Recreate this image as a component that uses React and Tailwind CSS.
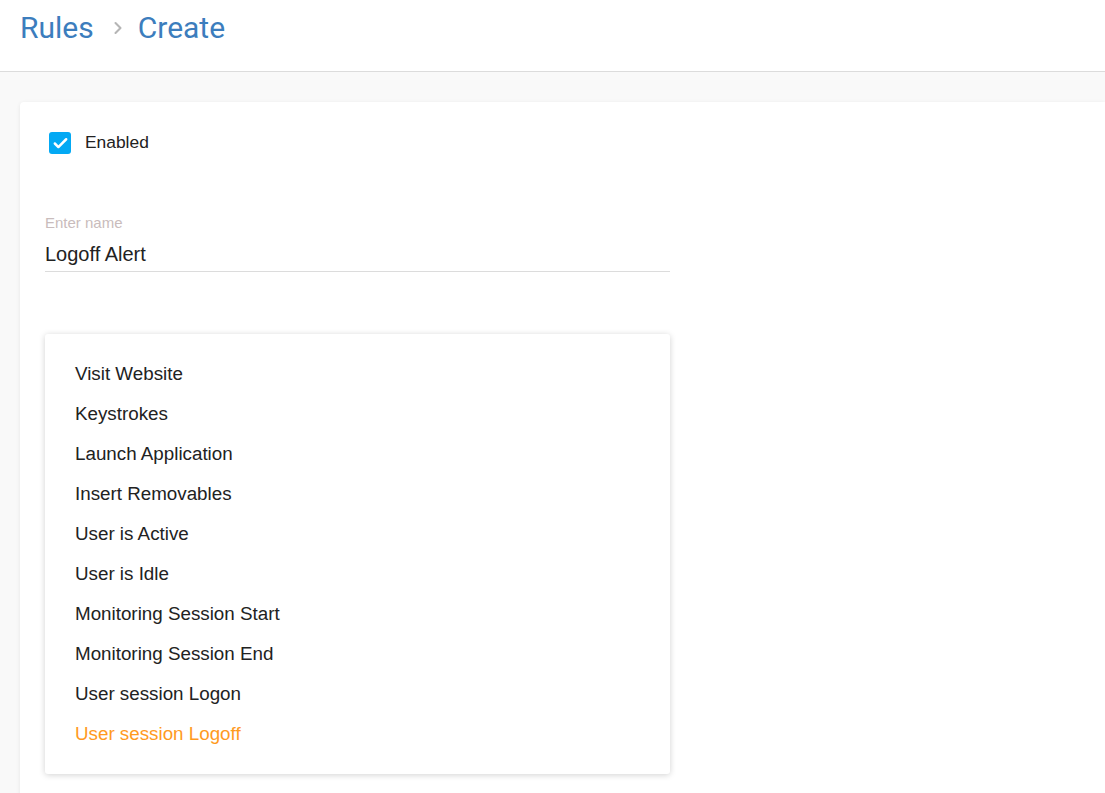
import { Check, ChevronRight } from 'lucide-react';

const triggers = [
  'Visit Website',
  'Keystrokes',
  'Launch Application',
  'Insert Removables',
  'User is Active',
  'User is Idle',
  'Monitoring Session Start',
  'Monitoring Session End',
  'User session Logon',
  'User session Logoff',
];

export default function App() {
  const selected = 'User session Logoff';
  return (
    <div className="w-[1105px] h-[793px] overflow-hidden bg-[#f9f9f9]" style={{ fontFamily: '"Liberation Sans", Arial, sans-serif' }}>
      {/* Header */}
      <div className="h-[72px] bg-white border-b border-[#dcdcdc] flex items-center pl-[20px] pb-[15px]" style={{ fontFamily: 'Roboto, sans-serif' }}>
        <span className="text-[30px] text-[#3c7dbd] leading-none">Rules</span>
        <ChevronRight className="ml-[14px] mr-[10px] text-[#b5b5b5]" size={20} strokeWidth={2.5} />
        <span className="text-[30px] text-[#3c7dbd] leading-none">Create</span>
      </div>

      {/* Body */}
      <div className="pt-[30px] pl-[20px]">
        <div className="bg-white rounded-tl-[4px] shadow-[0_1px_4px_rgba(0,0,0,0.08)] h-[720px] pl-[25px] pt-[29px]">
          <label className="h-[24px] flex items-center gap-[14px] pl-[4px]">
            <span className="w-[22px] h-[22px] rounded-[3px] bg-[#03a9f4] flex items-center justify-center">
              <Check size={17} strokeWidth={3.5} className="text-white" />
            </span>
            <span className="text-[17.4px] leading-none text-[#222]">Enabled</span>
          </label>

          <div className="mt-[60px] w-[625px]">
            <div className="text-[15px] text-[#c9bcbc] leading-[16px]">Enter name</div>
            <div className="text-[20px] text-[#222] leading-[24px] mt-[11px] pb-[5px] border-b border-[#dcdcdc]">Logoff Alert</div>
          </div>

          <div className="mt-[62px] w-[625px] bg-white rounded-[3px] shadow-[0_1px_6px_rgba(0,0,0,0.18)] pt-[20px] pb-[20px]">
            {triggers.map(t => (
              <div
                key={t}
                className={`h-[40px] flex items-center pl-[30px] text-[18.8px] ${t === selected ? 'text-[#ff9a1e]' : 'text-[#222]'}`}
              >
                {t}
              </div>
            ))}
          </div>
        </div>
      </div>
    </div>
  );
}
